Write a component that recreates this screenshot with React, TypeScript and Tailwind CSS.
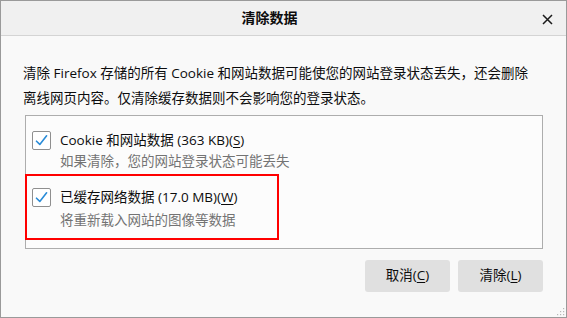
import React from "react";

const FONT = {
  fontFamily: '"Open Sans", "Noto Sans CJK SC", "Noto Sans", sans-serif',
};

function Check() {
  return (
    <div className="w-[19px] h-[19px] shrink-0 rounded-[2px] border border-[#8f8f8f] bg-white flex items-center justify-center">
      <svg width="13" height="13" viewBox="0 0 13 13">
        <path d="M1.5 7.2 L4.8 10.4 L11.6 1.8" fill="none" stroke="#2a8cd8" strokeWidth="1.6" strokeLinecap="round" strokeLinejoin="round" />
      </svg>
    </div>
  );
}

export default function App() {
  return (
    <div
      className="w-[567px] h-[318px] border border-[#9a9a9a] bg-[#f9f9f9] flex flex-col text-[#0c0c0d] relative overflow-hidden"
      style={FONT}
    >
      {/* title bar */}
      <div className="h-[35px] shrink-0 bg-[#f0f0f0] border-b border-[#d4d4d4] flex items-center relative">
        <div className="flex-1 flex justify-center pr-[28px] text-[14px] font-bold leading-none">清除数据</div>
        <svg className="absolute left-[541px] top-[13px]" width="11" height="11" viewBox="0 0 11 11">
          <path d="M1 1 L10 10 M10 1 L1 10" stroke="#1a1a1a" strokeWidth="1.5" />
        </svg>
      </div>

      {/* body */}
      <div className="flex-1 flex flex-col pl-[22px] pr-[23px] pt-[25px]">
        <p className="text-[13.5px] leading-[25px]">
          清除 Firefox 存储的所有 Cookie 和网站数据可能使您的网站登录状态丢失，还会删除
          <br />
          离线网页内容。仅清除缓存数据则不会影响您的登录状态。
        </p>

        <div className="mt-[4px] ml-[2px] h-[134px] border border-[#adadad] bg-[#fcfcfc] flex flex-col">
          <div className="pl-[6px] pt-[14px] pb-[3px]">
            <div className="flex items-center gap-[9px]">
              <Check />
              <span className="text-[13.5px] leading-[20px]">
                Cookie 和网站数据 (363 KB)(<span className="underline underline-offset-2">S</span>)
              </span>
            </div>
            <div className="pl-[28px] mt-[1px] text-[13.5px] leading-[20px] text-[#737373]">
              如果清除，您的网站登录状态可能丢失
            </div>
          </div>

          <div className="-ml-px w-[254px] h-[66px] border-2 border-[#ff0000] pl-[5px] pt-[11px]">
            <div className="flex items-center gap-[9px]">
              <Check />
              <span className="text-[13.5px] leading-[20px]">
                已缓存网络数据 (17.0 MB)(<span className="underline underline-offset-2">W</span>)
              </span>
            </div>
            <div className="pl-[28px] mt-[3px] text-[13.5px] leading-[20px] text-[#737373]">
              将重新载入网站的图像等数据
            </div>
          </div>
        </div>

        <div className="mt-[11px] flex justify-end gap-[8px]">
          <button className="w-[85px] h-[32px] rounded-[3px] bg-[#e0e0e0] text-[13.5px] leading-none text-[#0c0c0d]">
            取消(<span className="underline underline-offset-2">C</span>)
          </button>
          <button className="w-[85px] h-[32px] rounded-[3px] bg-[#e0e0e0] text-[13.5px] leading-none text-[#0c0c0d]">
            清除(<span className="underline underline-offset-2">L</span>)
          </button>
        </div>
      </div>

      {/* resize grip */}
      <svg className="absolute right-[1px] bottom-[1px]" width="10" height="10" viewBox="0 0 10 10">
        <g fill="#b8b8b8">
          <rect x="8" y="2" width="1.2" height="1.2" />
          <rect x="5" y="5" width="1.2" height="1.2" />
          <rect x="8" y="5" width="1.2" height="1.2" />
          <rect x="2" y="8" width="1.2" height="1.2" />
          <rect x="5" y="8" width="1.2" height="1.2" />
          <rect x="8" y="8" width="1.2" height="1.2" />
        </g>
      </svg>
    </div>
  );
}
